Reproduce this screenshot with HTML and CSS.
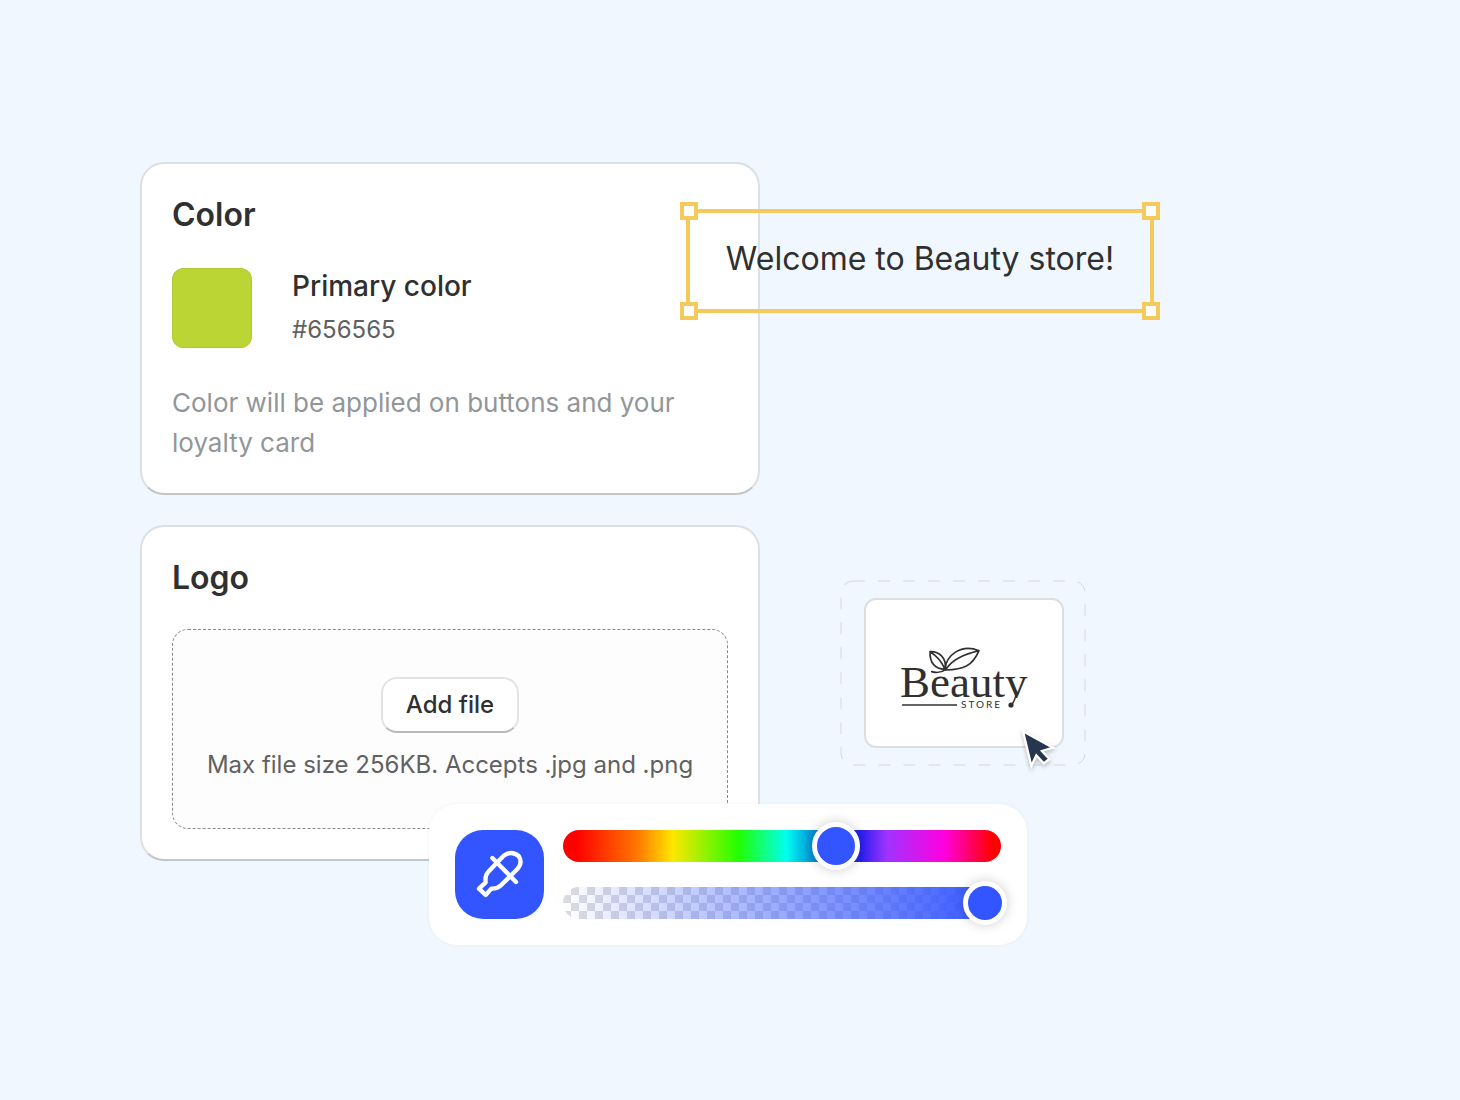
FILE: index.html
```html
<!DOCTYPE html>
<html lang="en">
<head>
<meta charset="utf-8">
<meta name="viewport" content="width=device-width, initial-scale=1">
<title>Store branding</title>
<link rel="stylesheet" href="styles.css">
</head>
<body>
<main class="stage">
  <section class="card card-color">
    <h2 class="card-title">Color</h2>
    <div class="color-row">
      <span class="swatch"></span>
      <div class="color-info">
        <h3 class="color-name">Primary color</h3>
        <p class="color-value">#656565</p>
      </div>
    </div>
    <p class="card-help">Color will be applied on buttons and your loyalty card</p>
    <div class="text-frame">
      <p class="frame-text">Welcome to Beauty store!</p>
      <span class="handle handle-tl"></span>
      <span class="handle handle-tr"></span>
      <span class="handle handle-bl"></span>
      <span class="handle handle-br"></span>
    </div>
  </section>

  <section class="card card-logo">
    <h2 class="card-title">Logo</h2>
    <div class="dropzone">
      <button class="add-file" type="button">Add file</button>
      <p class="drop-note">Max file size 256KB. Accepts .jpg and .png</p>
    </div>
    <div class="picker">
      <button class="eyedropper" type="button" aria-label="Pick a color from the screen">
        <svg class="eyedropper-icon" viewBox="150 150 180 180" aria-hidden="true">
          <path d="M197 262L177 281L197 300L214 281Q232 282 243 271L292 222Q309 203 296 183Q275 165 251 182L205 230Q194 241 197 262Z"/>
          <path d="M217 189L288 261"/>
        </svg>
      </button>
      <div class="sliders">
        <div class="track track-hue">
          <input class="slider slider-hue" type="range" min="0" max="360" value="230" aria-label="Hue">
        </div>
        <div class="track track-alpha">
          <input class="slider slider-alpha" type="range" min="0" max="100" value="100" aria-label="Opacity">
        </div>
      </div>
    </div>
  </section>

  <figure class="logo-drop">
    <svg class="logo-outline" aria-hidden="true"><rect x="1" y="1" width="244" height="184" rx="12"/></svg>
    <div class="logo-tile">
      <svg class="logo" viewBox="0 0 140 74" role="img" aria-label="Beauty Store logo">
        <defs>
          <clipPath id="above-rule"><path d="M0 0H140V62H0Z"/></clipPath>
        </defs>
        <g class="logo-leaves" transform="translate(-4 -1) scale(.3333)">
          <path d="M120 50C145 48 172 68 165 103C136 101 119 84 120 50ZM120 50Q150 68 164 101"/>
          <path d="M165 103C168 62 212 25 267 47C248 92 222 104 167 105M169 101C190 70 225 58 267 47"/>
          <path d="M125 110Q148 117 167 104"/>
        </g>
        <g clip-path="url(#above-rule)"><text class="logo-name" x="6" y="61">Beauty</text></g>
        <path class="logo-rule" d="M8 69H63"/>
        <text class="logo-sub" x="67" y="72">STORE</text>
        <path class="logo-tail" d="M122 59Q120 67 117 69"/>
        <circle class="logo-dot" cx="117" cy="69" r="2.6"/>
      </svg>
    </div>
    <svg class="cursor" viewBox="564 471 144 144" aria-hidden="true">
      <path d="M579 484L604 588L619 556L641 580L658 567L636 543L669 533Z"/>
    </svg>
  </figure>
</main>
</body>
</html>
```

FILE: styles.css
```css
* { box-sizing: border-box; }

body {
  margin: 0;
  background: #f1f7ff;
  color: #303030;
  font-family: Inter, "Liberation Sans", sans-serif;
}

h2, h3, p, figure { margin: 0; }

button { font: inherit; color: inherit; cursor: pointer; }

.stage {
  display: grid;
  grid-template-columns: minmax(0, 620px) 246px;
  gap: 30px 80px;
  min-height: 100vh;
  padding: 162px 140px;
  align-content: start;
}

.card {
  position: relative;
  grid-column: 1;
  padding: 30px;
  border: 2px solid #dcdfe3;
  border-bottom-color: #c3c6c9;
  border-radius: 24px;
  background: #fff;
}

.card-title {
  font-size: 32px;
  line-height: 42px;
  font-weight: 600;
}

.color-row {
  display: flex;
  gap: 40px;
  margin-top: 32px;
}

.swatch {
  width: 80px;
  height: 80px;
  border-radius: 12px;
  background: #bbd634;
  box-shadow: inset 0 0 0 1px #b1cb35;
}

.color-info {
  display: flex;
  flex-direction: column;
  gap: 8px;
}

.color-name {
  font-size: 28px;
  line-height: 36px;
  font-weight: 500;
}

.color-value {
  color: #616161;
  font-size: 24px;
  line-height: 36px;
}

.card-help {
  margin-top: 35px;
  color: #919699;
  font-size: 26px;
  line-height: 40px;
}

/* Selected text box, laid over the card's edge */
.text-frame {
  position: absolute;
  top: 45px;
  left: calc(100% - 72px);
  width: 468px;
  padding: 24px 0 28px;
  border: 4px solid #f3ca5b;
}

.frame-text {
  font-size: 32px;
  line-height: 44px;
  text-align: center;
  white-space: nowrap;
}

.handle {
  position: absolute;
  width: 18px;
  height: 18px;
  border: 4px solid #f3ca5b;
  background: #fff;
}

.handle-tl { top: -11px; left: -10px; }
.handle-tr { top: -11px; right: -10px; }
.handle-bl { bottom: -11px; left: -10px; }
.handle-br { bottom: -11px; right: -10px; }

.dropzone {
  display: flex;
  flex-direction: column;
  align-items: center;
  gap: 14px;
  margin-top: 30px;
  padding: 47px 16px 45px;
  border: 1px dashed #8a8a8a;
  border-radius: 16px;
  background: #fdfdfd;
}

.add-file {
  height: 56px;
  padding: 0 23px;
  border: 2px solid #e3e3e3;
  border-bottom-color: #b9b9b9;
  border-radius: 16px;
  background: #fff;
  font-size: 24px;
  line-height: 36px;
  font-weight: 500;
}

.drop-note {
  color: #616161;
  font-size: 24px;
  line-height: 36px;
}

/* Floating color picker */
.picker {
  position: absolute;
  top: 277px;
  left: 287px;
  display: flex;
  gap: 19px;
  width: 598px;
  padding: 26px;
  border-radius: 28px;
  background: #fff;
  box-shadow: 0 0 4px rgba(60, 60, 90, .06);
}

.eyedropper {
  display: grid;
  flex: none;
  place-items: center;
  width: 89px;
  height: 89px;
  padding: 0;
  border: 0;
  border-radius: 28px;
  background: #3355ff;
}

.eyedropper-icon {
  width: 60px;
  height: 60px;
  fill: none;
  stroke: #fff;
  stroke-width: 13;
  stroke-linecap: round;
  stroke-linejoin: round;
}

.sliders {
  display: flex;
  flex: 1;
  flex-direction: column;
  justify-content: space-between;
}

.track {
  display: flex;
  align-items: center;
  height: 32px;
  border-radius: 16px;
}

.track-hue {
  background: linear-gradient(90deg, #f00 3%, #ff7800 17%, #ffe600 25%, #2f0 40%, #00fff0 51%, #0090d8 57%, #2a1ff0 68%, #a033ff 74%, #ff00e0 87%, #f00 98%);
}

.track-alpha {
  background:
    linear-gradient(90deg, rgba(51, 85, 255, 0), #3355ff),
    conic-gradient(#dcdce0 0 25%, #fff 0 50%, #dcdce0 0 75%, #fff 0) 0 0 / 16px 16px;
}

.slider {
  flex: none;
  width: 100%;
  height: 48px;
  margin: 0;
  background: transparent;
  appearance: none;
}

.slider-alpha { width: calc(100% + 6px); }

.slider::-webkit-slider-thumb {
  width: 48px;
  height: 48px;
  border: 5px solid #fff;
  border-radius: 50%;
  background: #3355ff;
  box-shadow: 0 0 12px rgba(0, 0, 0, .2);
  appearance: none;
}

.slider-alpha::-webkit-slider-thumb {
  width: 44px;
  height: 44px;
}

.logo-drop {
  position: relative;
  grid-column: 2;
  grid-row: 2;
  align-self: start;
  margin-top: 55px;
  padding: 18px 22px 18px 24px;
}

.logo-outline {
  position: absolute;
  inset: 0;
  width: 100%;
  height: 100%;
  fill: none;
  stroke: #d3d7e2;
  stroke-width: 1;
  stroke-dasharray: 12 13;
}

.logo-tile {
  position: relative;
  display: grid;
  place-items: center;
  height: 150px;
  border: 2px solid #dcdfe2;
  border-radius: 12px;
  background: #fff;
}

.logo {
  width: 140px;
  height: 74px;
  fill: #303030;
}

.logo-leaves {
  fill: none;
  stroke: #303030;
  stroke-width: 5;
  stroke-linecap: round;
  stroke-linejoin: round;
}

.logo-name { font: 45px "Liberation Serif", serif; }

.logo-sub {
  font: 10px Lato, sans-serif;
  letter-spacing: 2px;
}

.logo-rule, .logo-tail {
  fill: none;
  stroke: #303030;
  stroke-width: 1.4;
}

.cursor {
  position: absolute;
  right: 20px;
  bottom: -9px;
  width: 48px;
  height: 48px;
  fill: #27364f;
  stroke: #fff;
  stroke-width: 7;
  filter: drop-shadow(0 2px 2px rgba(0, 0, 0, .25));
}
```
